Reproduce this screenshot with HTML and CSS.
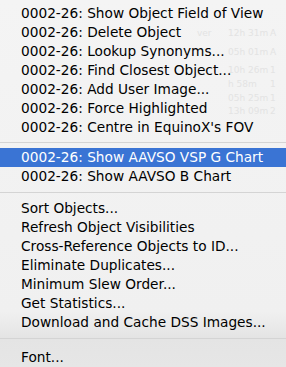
FILE: index.html
```html
<!DOCTYPE html>
<html>
<head>
	<meta charset="utf-8">
	<title>Menu</title>
   <link rel="stylesheet" href="styles.css">
</head>
<body>
   <div class="menu">
      <!-- faint window behind the translucent menu -->
      <div class="ghost">
         <div class="grow r1"><span class="c0">ver</span><span class="c1">12h 31m</span><span class="c2">A</span></div>
         <div class="grow r2"><span class="c1">05h 01m</span><span class="c2">A</span></div>
         <div class="grow r3"><span class="c1">10h 26m</span><span class="c2">1</span></div>
         <div class="grow r4"><span class="c1">h 58m</span><span class="c2">1</span></div>
         <div class="grow r5"><span class="c1">05h 25m</span><span class="c2">1</span></div>
         <div class="grow r6"><span class="c1">13h 09m</span><span class="c2">2</span></div>
      </div>
      <ul class="items first">
         <li>0002-26: Show Object Field of View</li>
         <li>0002-26: Delete Object</li>
         <li>0002-26: Lookup Synonyms...</li>
         <li>0002-26: Find Closest Object...</li>
         <li>0002-26: Add User Image...</li>
         <li>0002-26: Force Highlighted</li>
         <li>0002-26: Centre in EquinoX's FOV</li>
      </ul>
      <div class="sep s1"></div>
      <ul class="items">
         <li class="on">0002-26: Show AAVSO VSP G Chart</li>
         <li>0002-26: Show AAVSO B Chart</li>
      </ul>
      <div class="sep s2"></div>
      <ul class="items">
         <li>Sort Objects...</li>
         <li>Refresh Object Visibilities</li>
         <li>Cross-Reference Objects to ID...</li>
         <li>Eliminate Duplicates...</li>
         <li>Minimum Slew Order...</li>
         <li>Get Statistics...</li>
         <li>Download and Cache DSS Images...</li>
      </ul>
      <div class="sep s3"></div>
      <ul class="items">
         <li>Font...</li>
      </ul>
   </div>
</body>
</html>
```
FILE: styles.css
```css
   *{ margin: 0; padding: 0; }
   body{ width: 286px; height: 367px; overflow: hidden; background: #ececec; }

/*   menu box
*/   .menu{ position: relative; width: 286px; height: 367px; padding-top: 4px; box-sizing: border-box;
      background: linear-gradient(#f4f4f4, #f0f0f0 85%, #e4e4e4 92%, #e6e6e6);
      font-family: "DejaVu Sans", "Liberation Sans", sans-serif; font-size: 13.7px; color: #000; }

   .items{ position: relative; list-style: none; }
   .items li{ height: 19px; line-height: 19px; padding-left: 21px; white-space: nowrap; }
   .items li.on{ background: #3a74d4; color: #fff; }

   .sep{ position: relative; }
   .sep:after{ content: ""; position: absolute; left: 0; right: 0; height: 1px; background: #d4d4d4; }
   .s1{ height: 11px; }
   .s1:after{ top: 5px; }
   .s2{ height: 13px; }
   .s2:after{ top: 6px; }
   .s3{ height: 16px; }
   .s3:after{ top: 6px; }

/*   ghost text of the window underneath
*/   .ghost{ position: absolute; left: 0; top: 0; width: 286px; height: 140px; font-size: 9px; color: #e3e3e3; }
   .grow{ position: absolute; left: 0; width: 286px; height: 12px; line-height: 12px; }
   .grow span{ position: absolute; top: 0; white-space: nowrap; }
   .c0{ left: 197px; }
   .c1{ left: 228px; }
   .c2{ left: 270px; }
   .r1{ top: 27px; }
   .r2{ top: 46px; }
   .r3{ top: 64px; }
   .r4{ top: 78px; }
   .r5{ top: 92px; }
   .r6{ top: 105px; }
```
